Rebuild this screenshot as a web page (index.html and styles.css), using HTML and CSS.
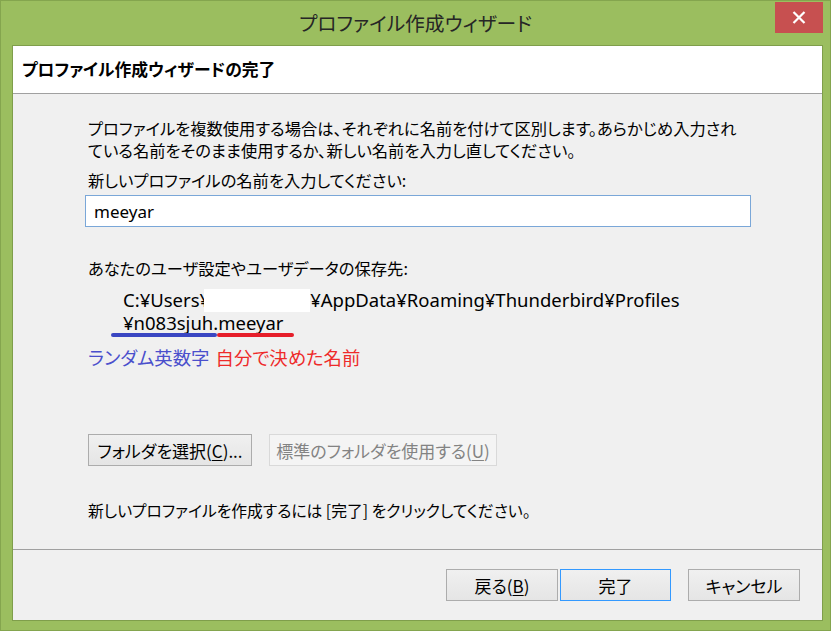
FILE: index.html
```html
<!DOCTYPE html>
<html lang="ja">
  <head>
    <meta charset="UTF-8" />
    <title>プロファイル作成ウィザード</title>
    <link rel="stylesheet" href="styles.css">
  </head>
  <body>
    <div class="window">
      <div class="titlebar">
        <div class="title">プロファイル作成ウィザード</div>
        <div class="close">
          <svg width="14" height="13" viewBox="0 0 14 13">
            <path d="M1.5 1 L12.5 12 M12.5 1 L1.5 12" stroke="#fff" stroke-width="2.2" fill="none" />
          </svg>
        </div>
      </div>

      <div class="client">
        <div class="header">プロファイル作成ウィザードの完了</div>

        <div class="content">
          <p class="intro">プロファイルを複数使用する場合は、それぞれに名前を付けて区別します。あらかじめ入力され<br>ている名前をそのまま使用するか、新しい名前を入力し直してください。</p>
          <p class="prompt">新しいプロファイルの名前を入力してください:</p>
          <input class="name" type="text" value="meeyar">

          <p class="where">あなたのユーザ設定やユーザデータの保存先:</p>
          <div class="path">
            <div>C:¥Users¥<span class="mask"></span>¥AppData¥Roaming¥Thunderbird¥Profiles</div>
            <div>¥n083sjuh.meeyar</div>
          </div>
          <div class="marks">
            <span class="mark blue"></span><span class="mark red"></span>
          </div>
          <div class="legend">
            <span class="blue-text">ランダム英数字</span>
            <span class="red-text">自分で決めた名前</span>
          </div>

          <div class="folder-row">
            <button class="btn choose">フォルダを選択(<u>C</u>)...</button>
            <button class="btn standard" disabled>標準のフォルダを使用する(<u>U</u>)</button>
          </div>

          <p class="finish">新しいプロファイルを作成するには [完了] をクリックしてください。</p>
        </div>

        <div class="footer">
          <button class="btn">戻る(<u>B</u>)</button>
          <button class="btn default">完了</button>
          <button class="btn cancel">キャンセル</button>
        </div>
      </div>
    </div>
  </body>
</html>
```

FILE: styles.css
```css
html, body {
  margin: 0;
  padding: 0;
}

body {
  width: 831px;
  height: 631px;
  background: #9bbe5f;
  font-family: "Noto Sans CJK JP", sans-serif;
  font-feature-settings: "palt";
  color: #000;
}

.window {
  width: 831px;
  height: 631px;
  box-sizing: border-box;
  border: 1px solid #84a54e;
  background: #9bbe5f;
}

.titlebar {
  display: grid;
  grid-template-columns: 48px 1fr 48px;
  height: 44px;
  padding: 0 7px;
}
.title {
  grid-column: 2;
  text-align: center;
  font-size: 19.8px;
  line-height: 44px;
  color: #262626;
}
.close {
  grid-column: 3;
  width: 48px;
  height: 31px;
  margin-top: 1px;
  background: #c75050;
  display: flex;
  align-items: center;
  justify-content: center;
}

.client {
  margin: 0 7px 8px 11px;
  border: 1px solid #7f9e4b;
  background: #f0f0f0;
}

.header {
  height: 47px;
  line-height: 47px;
  padding-left: 9px;
  background: #fff;
  border-bottom: 1px solid #a0a0a0;
  font-size: 16.8px;
  font-weight: bold;
}

.content {
  height: 456px;
  box-sizing: border-box;
  padding: 23px 0 0 75px;
  border-bottom: 1px solid #a0a0a0;
  font-size: 16.3px;
}
.content p {
  margin: 0;
  line-height: 22px;
}
.prompt {
  margin-top: 8px !important;
}
.name {
  display: block;
  box-sizing: border-box;
  width: 666px;
  height: 32px;
  margin: 4px 0 0 -3px;
  padding: 0 8px;
  border: 1px solid #7aa7d8;
  background: #fff;
  font-family: "Noto Sans", sans-serif;
  font-size: 17px;
  color: #000;
  outline: none;
}
.where {
  margin-top: 30px !important;
}

.path {
  margin: 10px 0 0 35px;
  font-family: "Noto Sans", sans-serif;
  font-size: 18.5px;
  line-height: 22px;
}
.mask {
  display: inline-block;
  width: 106px;
  height: 23px;
  margin-left: -6px;
  background: #fff;
  vertical-align: -5px;
}
.marks {
  display: flex;
  margin: -1px 0 0 23px;
}
.mark {
  height: 4px;
  border-radius: 2px;
}
.mark.blue {
  width: 106px;
  background: #3a46c2;
}
.mark.red {
  width: 77px;
  background: #e61e2a;
}
.legend {
  margin-top: 8px;
  line-height: 24px;
  font-size: 18.4px;
}
.blue-text {
  color: #4a4fcc;
}
.red-text {
  color: #ee2a2a;
  margin-left: 2px;
}

.folder-row {
  display: flex;
  gap: 17px;
  margin-top: 65px;
}
.choose {
  width: 164px;
}
.standard {
  width: 228px;
}
.finish {
  margin-top: 34px !important;
  font-size: 15.8px;
}

.btn {
  height: 32px;
  padding: 0;
  border: 1px solid #acacac;
  background: linear-gradient(#f0f0f0, #e5e5e5);
  font-family: "Noto Sans CJK JP", sans-serif;
  font-feature-settings: "palt";
  font-size: 17px;
  color: #000;
}
.btn u {
  text-underline-offset: 2px;
}
.btn[disabled] {
  background: #f4f4f4;
  border-color: #d9d9d9;
  color: #838383;
}

.footer {
  display: flex;
  justify-content: flex-end;
  padding: 19px 22px 0 0;
  height: 70px;
  box-sizing: border-box;
}
.footer .btn {
  width: 112px;
  margin-left: 2px;
}
.footer .default {
  width: 111px;
  border-color: #3399ff;
}
.footer .cancel {
  margin-left: 17px;
}
```
